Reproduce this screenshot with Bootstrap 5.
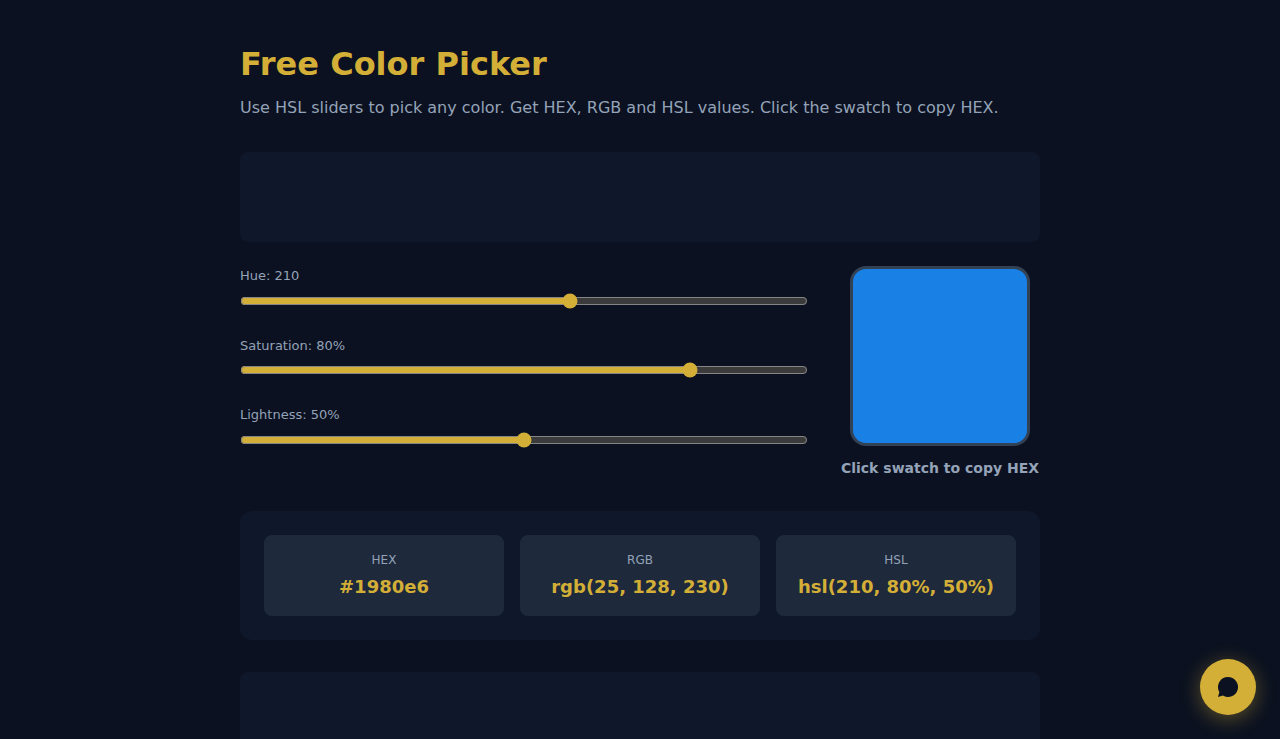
<!DOCTYPE html>
<html lang="en">
<head>
<meta charset="utf-8">
<meta name="viewport" content="width=device-width, initial-scale=1">
<title>Free Color Picker</title>
<link href="https://cdn.jsdelivr.net/npm/bootstrap@5.3.0/dist/css/bootstrap.min.css" rel="stylesheet">
<style>
  :root { color-scheme: dark; --gold: #d4af37; --muted: #94a3b8; --panel: #0f172a; --tile: #1e293b; --gap: 32px; }
  body { background: #0b1120; color: var(--muted); font-family: "DejaVu Sans", sans-serif; }
  .page { max-width: 848px; padding: 40px 24px; }
  .title { font-size: 32px; line-height: 48px; color: var(--gold); }
  .intro { margin-bottom: var(--gap); }
  .ad-slot { height: 90px; background: var(--panel); border-radius: 8px; }
  .picker { display: grid; grid-template-columns: 1fr 200px; gap: var(--gap); }
  .sliders { display: grid; gap: 27px; align-content: start; }
  .sliders label { font-size: 13px; margin-bottom: 7px; }
  .sliders input { accent-color: var(--gold); height: 16px; width: 100%; margin: 0; }
  .swatch { width: 180px; height: 180px; border: 3px solid #334155; border-radius: 16px; background: #1980e6; }
  .hint { font-size: 14px; margin-top: 12px; }
  .results { background: var(--panel); border-radius: 12px; margin: var(--gap) 0; }
  .tile { background: var(--tile); border-radius: 8px; }
  .tile dt { font-size: 12px; }
  .tile dd { font-size: 18px; color: var(--gold); }
  .chat, .chat:hover { width: 56px; height: 56px; right: 24px; bottom: 24px; background: var(--gold); color: #0b1120; box-shadow: 0 4px 20px rgba(212, 175, 55, .4); }
  @media (max-width: 700px) { .picker { grid-template-columns: 1fr; } }
</style>
</head>
<body>
<main class="page container">
  <h1 class="title fw-bold mb-2">Free Color Picker</h1>
  <p class="intro">Use HSL sliders to pick any color. Get HEX, RGB and HSL values. Click the swatch to copy HEX.</p>
  <div class="ad-slot mb-4"></div>

  <section class="picker">
    <div class="sliders">
      <div>
        <label class="d-block" for="hue">Hue: <span id="hueText">210</span></label>
        <input class="d-block" type="range" id="hue" min="0" max="360" value="210">
      </div>
      <div>
        <label class="d-block" for="sat">Saturation: <span id="satText">80</span>%</label>
        <input class="d-block" type="range" id="sat" min="0" max="100" value="80">
      </div>
      <div>
        <label class="d-block" for="light">Lightness: <span id="lightText">50</span>%</label>
        <input class="d-block" type="range" id="light" min="0" max="100" value="50">
      </div>
    </div>
    <div class="d-flex flex-column align-items-center">
      <button type="button" class="swatch" id="swatch" aria-label="Copy HEX"></button>
      <div class="hint fw-bold">Click swatch to copy HEX</div>
    </div>
  </section>

  <section class="results p-4">
    <dl class="row g-3 row-cols-1 row-cols-md-3 mb-0 text-center">
      <div class="col"><div class="tile p-3"><dt class="fw-normal mb-1">HEX</dt><dd class="fw-bold mb-0" id="hex">#1980e6</dd></div></div>
      <div class="col"><div class="tile p-3"><dt class="fw-normal mb-1">RGB</dt><dd class="fw-bold mb-0" id="rgb">rgb(25, 128, 230)</dd></div></div>
      <div class="col"><div class="tile p-3"><dt class="fw-normal mb-1">HSL</dt><dd class="fw-bold mb-0" id="hsl">hsl(210, 80%, 50%)</dd></div></div>
    </dl>
  </section>
  <div class="ad-slot"></div>
</main>

<button type="button" class="chat btn rounded-circle border-0 p-0 position-fixed d-flex align-items-center justify-content-center" aria-label="Open chat">
  <svg width="24" height="24" viewBox="0 0 24 24" fill="currentColor" aria-hidden="true"><path d="M12 2a10 10 0 0 0-8.600 15.100L2 22l4.900-1.400A10 10 0 1 0 12 2z"/></svg>
</button>
<script src="https://cdn.jsdelivr.net/npm/bootstrap@5.3.0/dist/js/bootstrap.bundle.min.js"></script>
</body>
</html>
